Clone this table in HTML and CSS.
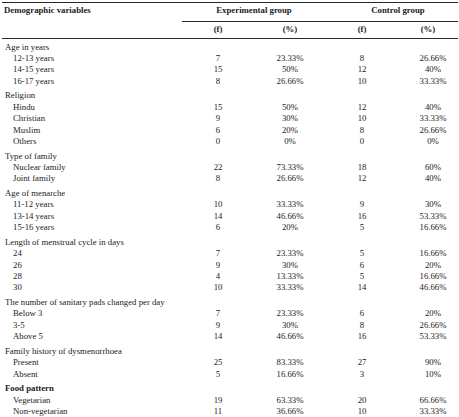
FILE: index.html
```html
<!DOCTYPE html>
<html lang="en">
<head>
    <meta charset="UTF-8">
    <meta name="viewport" content="width=device-width, initial-scale=1.0">
    <title>Demographic variables</title>
    <link rel="stylesheet" href="styles.css">
</head>
<body>
    <table class="demo">
        <colgroup>
            <col class="c-var">
            <col class="c-num">
            <col class="c-num">
            <col class="c-num">
            <col class="c-last">
        </colgroup>
        <thead>
            <tr class="head-top">
                <th class="var-head" rowspan="2">Demographic variables</th>
                <th class="group" colspan="2">Experimental group</th>
                <th class="group control" colspan="2">Control group</th>
            </tr>
            <tr class="head-sub">
                <th>(f)</th>
                <th>(%)</th>
                <th>(f)</th>
                <th class="last">(%)</th>
            </tr>
        </thead>
        <tbody>
            <tr class="cat first"><td colspan="5">Age in years</td></tr>
            <tr><td>12-13 years</td><td>7</td><td>23.33%</td><td>8</td><td class="last">26.66%</td></tr>
            <tr><td>14-15 years</td><td>15</td><td>50%</td><td>12</td><td class="last">40%</td></tr>
            <tr><td>16-17 years</td><td>8</td><td>26.66%</td><td>10</td><td class="last">33.33%</td></tr>

            <tr class="cat"><td colspan="5">Religion</td></tr>
            <tr><td>Hindu</td><td>15</td><td>50%</td><td>12</td><td class="last">40%</td></tr>
            <tr><td>Christian</td><td>9</td><td>30%</td><td>10</td><td class="last">33.33%</td></tr>
            <tr><td>Muslim</td><td>6</td><td>20%</td><td>8</td><td class="last">26.66%</td></tr>
            <tr><td>Others</td><td>0</td><td>0%</td><td>0</td><td class="last">0%</td></tr>

            <tr class="cat"><td colspan="5">Type of family</td></tr>
            <tr><td>Nuclear family</td><td>22</td><td>73.33%</td><td>18</td><td class="last">60%</td></tr>
            <tr><td>Joint family</td><td>8</td><td>26.66%</td><td>12</td><td class="last">40%</td></tr>

            <tr class="cat"><td colspan="5">Age of menarche</td></tr>
            <tr><td>11-12 years</td><td>10</td><td>33.33%</td><td>9</td><td class="last">30%</td></tr>
            <tr><td>13-14 years</td><td>14</td><td>46.66%</td><td>16</td><td class="last">53.33%</td></tr>
            <tr><td>15-16 years</td><td>6</td><td>20%</td><td>5</td><td class="last">16.66%</td></tr>

            <tr class="cat"><td colspan="5">Length of menstrual cycle in days</td></tr>
            <tr><td>24</td><td>7</td><td>23.33%</td><td>5</td><td class="last">16.66%</td></tr>
            <tr><td>26</td><td>9</td><td>30%</td><td>6</td><td class="last">20%</td></tr>
            <tr><td>28</td><td>4</td><td>13.33%</td><td>5</td><td class="last">16.66%</td></tr>
            <tr><td>30</td><td>10</td><td>33.33%</td><td>14</td><td class="last">46.66%</td></tr>

            <tr class="cat"><td colspan="5">The number of sanitary pads changed per day</td></tr>
            <tr><td>Below 3</td><td>7</td><td>23.33%</td><td>6</td><td class="last">20%</td></tr>
            <tr><td>3-5</td><td>9</td><td>30%</td><td>8</td><td class="last">26.66%</td></tr>
            <tr><td>Above 5</td><td>14</td><td>46.66%</td><td>16</td><td class="last">53.33%</td></tr>

            <tr class="cat"><td colspan="5">Family history of dysmenorrhoea</td></tr>
            <tr><td>Present</td><td>25</td><td>83.33%</td><td>27</td><td class="last">90%</td></tr>
            <tr><td>Absent</td><td>5</td><td>16.66%</td><td>3</td><td class="last">10%</td></tr>

            <tr class="cat bold"><td colspan="5">Food pattern</td></tr>
            <tr><td>Vegetarian</td><td>19</td><td>63.33%</td><td>20</td><td class="last">66.66%</td></tr>
            <tr class="end"><td>Non-vegetarian</td><td>11</td><td>36.66%</td><td>10</td><td class="last">33.33%</td></tr>
        </tbody>
    </table>
</body>
</html>
```

FILE: styles.css
```css
body {
    margin: 0;
    padding: 2px 0 0 2px;
    background-color: #fff;
    color: #1c1c1c;
    font-family: "Liberation Serif", "Times New Roman", serif;
    font-size: 8.75px;
}
.demo {
    width: 456px;
    border-collapse: collapse;
    table-layout: fixed;
    border-top: 1.5px solid #2a2a2a;
    border-bottom: 2px solid #4a4a4a;
}
.c-var {
    width: 180px;
}
.c-num {
    width: 72px;
}
.c-last {
    width: 60px;
}
th, td {
    padding: 0;
    line-height: 11.4px;
    text-align: center;
    font-weight: normal;
}
th {
    font-weight: bold;
}
.head-top th {
    padding: 1.5px 0 5px;
    line-height: 11px;
}
.head-top .group {
    border-bottom: 1px solid #2a2a2a;
}
.head-top .control {
    padding-left: 12px;
}
.var-head {
    text-align: left;
    vertical-align: top;
    padding-left: 2px !important;
    border-bottom: 1px solid #2a2a2a;
}
.head-sub th {
    padding: 2.5px 0 3px;
    line-height: 11px;
    border-bottom: 1px solid #2a2a2a;
}
td:first-child {
    text-align: left;
    padding-left: 11px;
}
.last {
    padding-left: 10px;
}
.cat td {
    text-align: left;
    padding-left: 3px;
    padding-top: 3.2px;
}
.cat.first td {
    padding-top: 2.5px;
}
.cat.bold td {
    font-weight: bold;
}
.end td {
    padding-bottom: 1px;
}
```
